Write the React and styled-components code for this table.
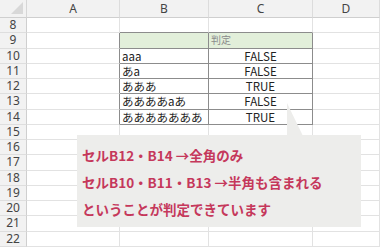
import React from "react";
import styled, { createGlobalStyle } from "styled-components";

const Global = createGlobalStyle`
  html, body { margin: 0; padding: 0; background: #fff; }
  body { width: 380px; height: 247px; overflow: hidden; }
`;

const Sheet = styled.div`
  position: relative;
  width: 380px;
  height: 247px;
  overflow: hidden;
  display: grid;
  grid-template-columns: 27px 93px 89px 104px 67px;
  grid-template-rows: 18px repeat(15, 15.25px);
  font-family: "Noto Sans CJK JP", "Noto Sans", sans-serif;
  background: #fff;
`;

const Corner = styled.div`
  position: relative;
  background: #f2f2f2;
  border-right: 1px solid #d6d6d6;
  border-bottom: 1px solid #cfcfcf;
  box-sizing: border-box;
`;

const CornerTri = styled.div`
  position: absolute;
  right: 3px;
  bottom: 3px;
  width: 0;
  height: 0;
  border-left: 12px solid transparent;
  border-bottom: 12px solid #d8d8d8;
`;

const ColHead = styled.div`
  background: #f2f2f2;
  border-right: 1px solid #dcdcdc;
  border-bottom: 1px solid #cfcfcf;
  box-sizing: border-box;
  display: flex;
  align-items: center;
  justify-content: center;
  font-family: "Noto Sans", "Open Sans", sans-serif;
  font-size: 12px;
  line-height: 1;
  color: #444;
  padding-top: 1px;
`;

const RowHead = styled.div`
  background: #f2f2f2;
  border-right: 1px solid #cfcfcf;
  border-bottom: 1px solid #dedede;
  box-sizing: border-box;
  display: flex;
  align-items: center;
  justify-content: center;
  font-family: "Noto Sans", "Open Sans", sans-serif;
  font-size: 12px;
  line-height: 1;
  color: #444;
`;

const Cell = styled.div`
  box-sizing: border-box;
  border-right: 1px solid ${(p) => (p.$rightDark ? "#8c8c8c" : "#e2e2e2")};
  border-bottom: 1px solid ${(p) => (p.$bottomDark ? "#8c8c8c" : "#e2e2e2")};
  background: ${(p) => (p.$fill ? "#e2efda" : "#fff")};
  display: flex;
  align-items: center;
  justify-content: ${(p) => (p.$center ? "center" : "flex-start")};
  padding: 0 2px;
  font-size: ${(p) => (p.$muted ? "10px" : "11.5px")};
  color: ${(p) => (p.$muted ? "#8a8a8a" : "#222")};
  white-space: nowrap;
  line-height: 12px;
  min-width: 0;
`;

const Callout = styled.div`
  position: absolute;
  left: 77px;
  top: 135px;
  width: 284px;
  height: 92px;
  box-sizing: border-box;
  background: #ededeb;
  padding: 7px 0 0 5px;
  color: #c5385b;
  font-family: "Noto Sans CJK JP", sans-serif;
  font-weight: 700;
  font-size: 13.5px;
  line-height: 27px;
  white-space: nowrap;
`;

const Pointer = styled.svg`
  position: absolute;
  left: 207px;
  top: -32px;
  width: 20px;
  height: 33px;
  overflow: visible;
`;

const Line = styled.div``;

const cols = ["A", "B", "C", "D"];
const data = {
  9: ["", "", "判定", ""],
  10: ["", "aaa", "FALSE", ""],
  11: ["", "あa", "FALSE", ""],
  12: ["", "あああ", "TRUE", ""],
  13: ["", "ああああaあ", "FALSE", ""],
  14: ["", "あああああああ", "TRUE", ""],
};

export default function App() {
  const rows = [];
  for (let r = 8; r <= 22; r++) rows.push(r);
  const inTable = (r, c) => r >= 9 && r <= 14 && (c === 1 || c === 2);
  return (
    <>
      <Global />
      <Sheet>
        <Corner>
          <CornerTri />
        </Corner>
        {cols.map((c) => (
          <ColHead key={c}>{c}</ColHead>
        ))}
        {rows.map((r) => (
          <React.Fragment key={r}>
            <RowHead>{r}</RowHead>
            {cols.map((c, ci) => {
              const text = data[r] ? data[r][ci] : "";
              const rightDark = inTable(r, ci) || inTable(r, ci + 1);
              const bottomDark = inTable(r, ci) || inTable(r + 1, ci);
              return (
                <Cell
                  key={c}
                  $rightDark={rightDark}
                  $bottomDark={bottomDark}
                  $fill={r === 9 && inTable(r, ci)}
                  $center={ci === 2 && r > 9}
                  $muted={r === 9}
                >
                  {text}
                </Cell>
              );
            })}
          </React.Fragment>
        ))}
        <Callout>
          <Pointer viewBox="0 0 20 33">
            <polygon points="3,0 3,33 19,33" fill="#ededeb" />
          </Pointer>
          <Line>セルB12・B14 →全角のみ</Line>
          <Line>セルB10・B11・B13 →半角も含まれる</Line>
          <Line>ということが判定できています</Line>
        </Callout>
      </Sheet>
    </>
  );
}
